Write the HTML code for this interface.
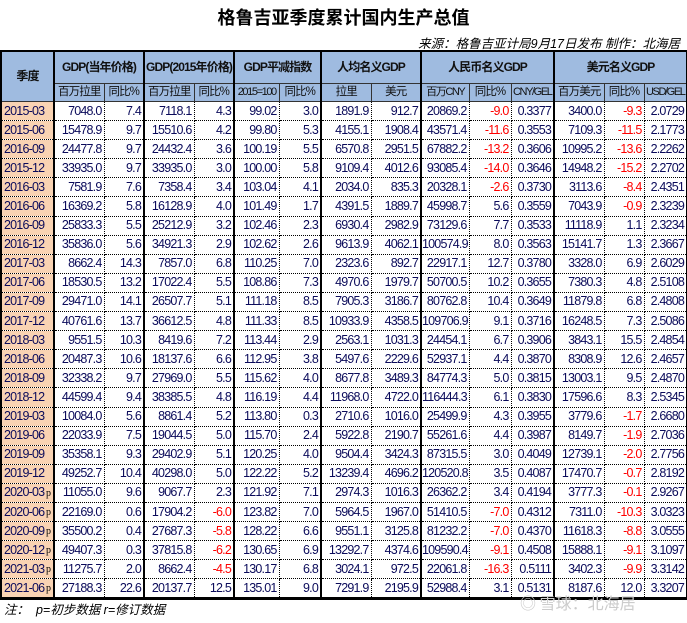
<!DOCTYPE html><html><head><meta charset="utf-8"><style>
body{margin:0;width:687px;height:623px;background:#fff;position:relative;overflow:hidden;font-family:"Liberation Sans","Noto Sans CJK SC",sans-serif}
.t{position:absolute;top:4px;left:0;width:687px;text-align:center;font:bold 18px "Liberation Sans","Noto Sans CJK SC",sans-serif;color:#000}
.s{position:absolute;top:33px;right:7px;font:italic 12.5px "Liberation Sans","Noto Sans CJK SC",sans-serif;color:#000}
.f{position:absolute;top:599px;left:4px;font:italic 12.5px "Liberation Sans","Noto Sans CJK SC",sans-serif;color:#000}
.w{position:absolute;top:590px;left:520px;font:16px "Noto Sans CJK SC",sans-serif;color:#ccc}
table{position:absolute;top:50px;left:0;border-collapse:collapse;table-layout:fixed;width:686px;border-top:2px solid #000;border-bottom:3px solid #000}
td{border:1px dotted #000;padding:0 2px 0 0;text-align:right;font-size:12.5px;letter-spacing:-0.8px;color:#0a0a5a;height:18.1px;line-height:17px;white-space:nowrap;overflow:hidden}
thead td{background:#9fbbe0;text-align:center;color:#111;padding:0;border:1px solid #333}
thead tr.a td{height:31px;font-weight:bold;font-size:12px;letter-spacing:-0.9px}
thead tr.b td{height:16px;font-size:11.5px;letter-spacing:-0.9px}
thead tr.b td.x{letter-spacing:-1.4px;font-size:11px}
td.d{background:#f9d3b3;text-align:left;padding-left:2px;border-left:2px solid #000;border-right:2px solid #000;position:relative}
td.d i{position:absolute;right:2px;top:4px;font:normal 10px "Liberation Serif",serif;color:#000;letter-spacing:0}
.g{border-right:2px solid #000}
.n{color:#f00}
</style></head><body>
<div class="t">格鲁吉亚季度累计国内生产总值</div>
<div class="s">来源：格鲁吉亚计局9月17日发布 制作：北海居</div>
<table>
<colgroup><col style="width:53px"><col style="width:50px"><col style="width:40px"><col style="width:50px"><col style="width:40px"><col style="width:45px"><col style="width:42px"><col style="width:50px"><col style="width:50px"><col style="width:48px"><col style="width:42px"><col style="width:43px"><col style="width:50px"><col style="width:40px"><col style="width:43px"></colgroup>
<thead>
<tr class="a"><td rowspan="2" style="border-left:2px solid #000;border-right:2px solid #000">季度</td><td colspan="2" class="g">GDP(当年价格)</td><td colspan="2" class="g">GDP(2015年价格)</td><td colspan="2" class="g">GDP平减指数</td><td colspan="2" class="g">人均名义GDP</td><td colspan="3" class="g">人民币名义GDP</td><td colspan="3" class="g">美元名义GDP</td></tr>
<tr class="b"><td>百万拉里</td><td class="g">同比%</td><td>百万拉里</td><td class="g">同比%</td><td class="x">2015=100</td><td class="g">同比%</td><td>拉里</td><td class="g">美元</td><td class="x">百万CNY</td><td>同比%</td><td class="g x">CNY/GEL</td><td>百万美元</td><td>同比%</td><td class="g x">USD/GEL</td></tr>
</thead>
<tbody>
<tr><td class="d">2015-03</td><td>7048.0</td><td class="g">7.4</td><td>7118.1</td><td class="g">4.3</td><td>99.02</td><td class="g">3.0</td><td>1891.9</td><td class="g">912.7</td><td>20869.2</td><td class="n">-9.0</td><td class="g">0.3377</td><td>3400.0</td><td class="n">-9.3</td><td class="g">2.0729</td></tr>
<tr><td class="d">2015-06</td><td>15478.9</td><td class="g">9.7</td><td>15510.6</td><td class="g">4.2</td><td>99.80</td><td class="g">5.3</td><td>4155.1</td><td class="g">1908.4</td><td>43571.4</td><td class="n">-11.6</td><td class="g">0.3553</td><td>7109.3</td><td class="n">-11.5</td><td class="g">2.1773</td></tr>
<tr><td class="d">2016-09</td><td>24477.8</td><td class="g">9.7</td><td>24432.4</td><td class="g">3.6</td><td>100.19</td><td class="g">5.5</td><td>6570.8</td><td class="g">2951.5</td><td>67882.2</td><td class="n">-13.2</td><td class="g">0.3606</td><td>10995.2</td><td class="n">-13.6</td><td class="g">2.2262</td></tr>
<tr><td class="d">2015-12</td><td>33935.0</td><td class="g">9.7</td><td>33935.0</td><td class="g">3.0</td><td>100.00</td><td class="g">5.8</td><td>9109.4</td><td class="g">4012.6</td><td>93085.4</td><td class="n">-14.0</td><td class="g">0.3646</td><td>14948.2</td><td class="n">-15.2</td><td class="g">2.2702</td></tr>
<tr><td class="d">2016-03</td><td>7581.9</td><td class="g">7.6</td><td>7358.4</td><td class="g">3.4</td><td>103.04</td><td class="g">4.1</td><td>2034.0</td><td class="g">835.3</td><td>20328.1</td><td class="n">-2.6</td><td class="g">0.3730</td><td>3113.6</td><td class="n">-8.4</td><td class="g">2.4351</td></tr>
<tr><td class="d">2016-06</td><td>16369.2</td><td class="g">5.8</td><td>16128.9</td><td class="g">4.0</td><td>101.49</td><td class="g">1.7</td><td>4391.5</td><td class="g">1889.7</td><td>45998.7</td><td>5.6</td><td class="g">0.3559</td><td>7043.9</td><td class="n">-0.9</td><td class="g">2.3239</td></tr>
<tr><td class="d">2016-09</td><td>25833.3</td><td class="g">5.5</td><td>25212.9</td><td class="g">3.2</td><td>102.46</td><td class="g">2.3</td><td>6930.4</td><td class="g">2982.9</td><td>73129.6</td><td>7.7</td><td class="g">0.3533</td><td>11118.9</td><td>1.1</td><td class="g">2.3234</td></tr>
<tr><td class="d">2016-12</td><td>35836.0</td><td class="g">5.6</td><td>34921.3</td><td class="g">2.9</td><td>102.62</td><td class="g">2.6</td><td>9613.9</td><td class="g">4062.1</td><td>100574.9</td><td>8.0</td><td class="g">0.3563</td><td>15141.7</td><td>1.3</td><td class="g">2.3667</td></tr>
<tr><td class="d">2017-03</td><td>8662.4</td><td class="g">14.3</td><td>7857.0</td><td class="g">6.8</td><td>110.25</td><td class="g">7.0</td><td>2323.6</td><td class="g">892.7</td><td>22917.1</td><td>12.7</td><td class="g">0.3780</td><td>3328.0</td><td>6.9</td><td class="g">2.6029</td></tr>
<tr><td class="d">2017-06</td><td>18530.5</td><td class="g">13.2</td><td>17022.4</td><td class="g">5.5</td><td>108.86</td><td class="g">7.3</td><td>4970.6</td><td class="g">1979.7</td><td>50700.5</td><td>10.2</td><td class="g">0.3655</td><td>7380.3</td><td>4.8</td><td class="g">2.5108</td></tr>
<tr><td class="d">2017-09</td><td>29471.0</td><td class="g">14.1</td><td>26507.7</td><td class="g">5.1</td><td>111.18</td><td class="g">8.5</td><td>7905.3</td><td class="g">3186.7</td><td>80762.8</td><td>10.4</td><td class="g">0.3649</td><td>11879.8</td><td>6.8</td><td class="g">2.4808</td></tr>
<tr><td class="d">2017-12</td><td>40761.6</td><td class="g">13.7</td><td>36612.5</td><td class="g">4.8</td><td>111.33</td><td class="g">8.5</td><td>10933.9</td><td class="g">4358.5</td><td>109706.9</td><td>9.1</td><td class="g">0.3716</td><td>16248.5</td><td>7.3</td><td class="g">2.5086</td></tr>
<tr><td class="d">2018-03</td><td>9551.5</td><td class="g">10.3</td><td>8419.6</td><td class="g">7.2</td><td>113.44</td><td class="g">2.9</td><td>2563.1</td><td class="g">1031.3</td><td>24454.1</td><td>6.7</td><td class="g">0.3906</td><td>3843.1</td><td>15.5</td><td class="g">2.4854</td></tr>
<tr><td class="d">2018-06</td><td>20487.3</td><td class="g">10.6</td><td>18137.6</td><td class="g">6.6</td><td>112.95</td><td class="g">3.8</td><td>5497.6</td><td class="g">2229.6</td><td>52937.1</td><td>4.4</td><td class="g">0.3870</td><td>8308.9</td><td>12.6</td><td class="g">2.4657</td></tr>
<tr><td class="d">2018-09</td><td>32338.2</td><td class="g">9.7</td><td>27969.0</td><td class="g">5.5</td><td>115.62</td><td class="g">4.0</td><td>8677.8</td><td class="g">3489.3</td><td>84774.3</td><td>5.0</td><td class="g">0.3815</td><td>13003.1</td><td>9.5</td><td class="g">2.4870</td></tr>
<tr><td class="d">2018-12</td><td>44599.4</td><td class="g">9.4</td><td>38385.5</td><td class="g">4.8</td><td>116.19</td><td class="g">4.4</td><td>11968.0</td><td class="g">4722.0</td><td>116444.3</td><td>6.1</td><td class="g">0.3830</td><td>17596.6</td><td>8.3</td><td class="g">2.5345</td></tr>
<tr><td class="d">2019-03</td><td>10084.0</td><td class="g">5.6</td><td>8861.4</td><td class="g">5.2</td><td>113.80</td><td class="g">0.3</td><td>2710.6</td><td class="g">1016.0</td><td>25499.9</td><td>4.3</td><td class="g">0.3955</td><td>3779.6</td><td class="n">-1.7</td><td class="g">2.6680</td></tr>
<tr><td class="d">2019-06</td><td>22033.9</td><td class="g">7.5</td><td>19044.5</td><td class="g">5.0</td><td>115.70</td><td class="g">2.4</td><td>5922.8</td><td class="g">2190.7</td><td>55261.6</td><td>4.4</td><td class="g">0.3987</td><td>8149.7</td><td class="n">-1.9</td><td class="g">2.7036</td></tr>
<tr><td class="d">2019-09</td><td>35358.1</td><td class="g">9.3</td><td>29402.9</td><td class="g">5.1</td><td>120.25</td><td class="g">4.0</td><td>9504.4</td><td class="g">3424.3</td><td>87315.5</td><td>3.0</td><td class="g">0.4049</td><td>12739.1</td><td class="n">-2.0</td><td class="g">2.7756</td></tr>
<tr><td class="d">2019-12</td><td>49252.7</td><td class="g">10.4</td><td>40298.0</td><td class="g">5.0</td><td>122.22</td><td class="g">5.2</td><td>13239.4</td><td class="g">4696.2</td><td>120520.8</td><td>3.5</td><td class="g">0.4087</td><td>17470.7</td><td class="n">-0.7</td><td class="g">2.8192</td></tr>
<tr><td class="d">2020-03<i>p</i></td><td>11055.0</td><td class="g">9.6</td><td>9067.7</td><td class="g">2.3</td><td>121.92</td><td class="g">7.1</td><td>2974.3</td><td class="g">1016.3</td><td>26362.2</td><td>3.4</td><td class="g">0.4194</td><td>3777.3</td><td class="n">-0.1</td><td class="g">2.9267</td></tr>
<tr><td class="d">2020-06<i>p</i></td><td>22169.0</td><td class="g">0.6</td><td>17904.2</td><td class="g n">-6.0</td><td>123.82</td><td class="g">7.0</td><td>5964.5</td><td class="g">1967.0</td><td>51410.5</td><td class="n">-7.0</td><td class="g">0.4312</td><td>7311.0</td><td class="n">-10.3</td><td class="g">3.0323</td></tr>
<tr><td class="d">2020-09<i>p</i></td><td>35500.2</td><td class="g">0.4</td><td>27687.3</td><td class="g n">-5.8</td><td>128.22</td><td class="g">6.6</td><td>9551.1</td><td class="g">3125.8</td><td>81232.2</td><td class="n">-7.0</td><td class="g">0.4370</td><td>11618.3</td><td class="n">-8.8</td><td class="g">3.0555</td></tr>
<tr><td class="d">2020-12<i>p</i></td><td>49407.3</td><td class="g">0.3</td><td>37815.8</td><td class="g n">-6.2</td><td>130.65</td><td class="g">6.9</td><td>13292.7</td><td class="g">4374.6</td><td>109590.4</td><td class="n">-9.1</td><td class="g">0.4508</td><td>15888.1</td><td class="n">-9.1</td><td class="g">3.1097</td></tr>
<tr><td class="d">2021-03<i>p</i></td><td>11275.7</td><td class="g">2.0</td><td>8662.4</td><td class="g n">-4.5</td><td>130.17</td><td class="g">6.8</td><td>3024.1</td><td class="g">972.5</td><td>22061.8</td><td class="n">-16.3</td><td class="g">0.5111</td><td>3402.3</td><td class="n">-9.9</td><td class="g">3.3142</td></tr>
<tr><td class="d">2021-06<i>p</i></td><td>27188.3</td><td class="g">22.6</td><td>20137.7</td><td class="g">12.5</td><td>135.01</td><td class="g">9.0</td><td>7291.9</td><td class="g">2195.9</td><td>52988.4</td><td>3.1</td><td class="g">0.5131</td><td>8187.6</td><td>12.0</td><td class="g">3.3207</td></tr>
</tbody></table>
<div class="f">注：&nbsp; p=初步数据 r=修订数据</div>
<div class="w">◎ 雪球：北海居</div>
</body></html>
